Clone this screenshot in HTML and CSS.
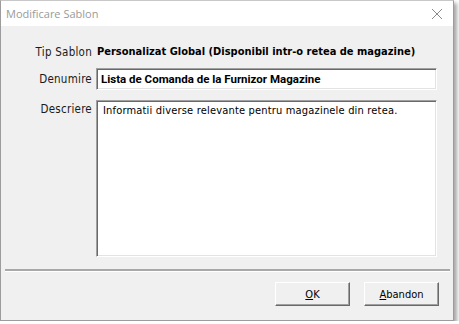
FILE: index.html
```html
<!DOCTYPE html>
<html>
<head>
<meta charset="utf-8">
<title>Modificare Sablon</title>
<link rel="stylesheet" href="styles.css">
</head>
<body>

<div class="window">
  <div class="titlebar">
    <span class="title">Modificare Sablon</span>
    <svg class="close" width="12" height="12" viewBox="0 0 12 12">
      <path d="M1 1 L11 11 M11 1 L1 11" stroke="#8a8a8a" stroke-width="1" fill="none"/>
    </svg>
  </div>

  <div class="form">
    <div class="label lblTip">Tip Sablon</div>
    <div class="value">Personalizat Global (Disponibil intr-o retea de magazine)</div>

    <div class="label lblMid">Denumire</div>
    <div class="edit"><span class="boldText">Lista de Comanda de la Furnizor Magazine</span></div>

    <div class="label lblTop">Descriere</div>
    <div class="memo">Informatii diverse relevante pentru magazinele din retea.</div>
  </div>

  <div class="separator"></div>

  <div class="buttons">
    <div class="btn"><u>O</u>K</div>
    <div class="btn"><u>A</u>bandon</div>
  </div>
</div>

</body>
</html>
```

FILE: styles.css
```css
body { margin: 0; background: #ffffff; }

.window {
  width: 454px; height: 321px; box-sizing: border-box;
  border: 1px solid #9c9c9c; border-top-color: #c8c8c8;
  background: #f0f0f0;
  box-shadow: 3px 3px 4px rgba(0,0,0,0.35);
  display: flex; flex-direction: column;
  font-family: "DejaVu Sans Condensed", "DejaVu Sans", sans-serif;
  font-size: 11px; color: #000;
}

.titlebar {
  height: 25px; background: #ffffff;
  display: flex; align-items: center; justify-content: space-between;
  padding: 0 10px 0 5px;
}
.title { font-family: "Open Sans", "Noto Sans", sans-serif; font-size: 11px; color: #9a9a9a; }
.close { display: block; }

.form {
  display: grid;
  grid-template-columns: 91px 341px;
  grid-template-rows: 14px 22px 158px;
  column-gap: 4px; row-gap: 9px;
  padding-top: 19px;
}
.form > .memo { margin-top: 1px; }

.label { text-align: right; line-height: 14px; font-size: 11.5px; letter-spacing: 0.25px; color: #1a1a1a; }
.lblMid { align-self: center; }
.lblTop { padding-top: 3px; }

.value { font-weight: bold; line-height: 14px; padding-left: 1px; white-space: nowrap; }

.edit, .memo {
  background: #ffffff; box-sizing: border-box;
  border-top: 1px solid #a0a0a0; border-left: 1px solid #a0a0a0;
  border-bottom: 1px solid #ffffff; border-right: 1px solid #ffffff;
  box-shadow: inset 1px 1px 0 #696969, inset -1px -1px 0 #e3e3e3;
}
.edit { display: flex; align-items: center; padding-left: 4px; }
.boldText { font-family: Roboto, "Liberation Sans", sans-serif; font-weight: bold; font-size: 11.5px; }
.memo { padding: 3px 6px; line-height: 14px; letter-spacing: 0.18px; }

.separator {
  margin: 12px 3px 0 4px; height: 0;
  border-top: 2px solid #a8a8a8; border-bottom: 1px solid #ffffff;
}

.buttons {
  display: flex; justify-content: flex-end; gap: 14px;
  padding: 10px 14px 0 0;
}
.btn {
  width: 75px; height: 24px; box-sizing: border-box;
  display: flex; align-items: center; justify-content: center;
  background: #f0f0f0;
  border-top: 1px solid #ffffff; border-left: 1px solid #ffffff;
  border-bottom: 1px solid #696969; border-right: 1px solid #696969;
  box-shadow: inset -1px -1px 0 #a0a0a0;
}
```
